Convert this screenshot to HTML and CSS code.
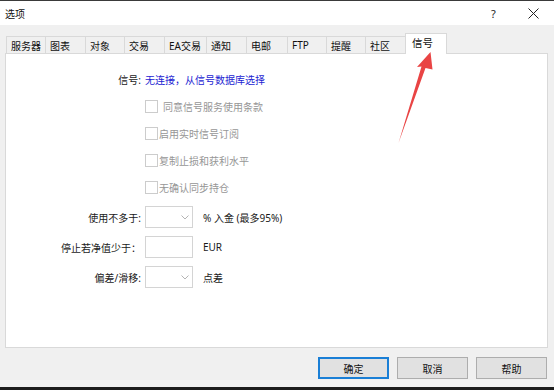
FILE: index.html
```html
<!DOCTYPE html>
<html lang="zh-CN">
<head>
<meta charset="utf-8">
<title>选项</title>
<link rel="stylesheet" href="styles.css">
</head>
<body>
<div class="window">
  <div class="titlebar">
    <span class="title">选项</span>
    <span class="help">?</span>
    <span class="close"><svg width="11" height="11" viewBox="0 0 11 11"><path d="M0.5 0.5 L10.5 10.5 M10.5 0.5 L0.5 10.5" stroke="#222" stroke-width="1" fill="none"/></svg></span>
  </div>
  <div class="tabs">
    <div class="tab w39">服务器</div>
    <div class="tab w40">图表</div>
    <div class="tab w39">对象</div>
    <div class="tab w40">交易</div>
    <div class="tab w42">EA交易</div>
    <div class="tab w40">通知</div>
    <div class="tab w41">电邮</div>
    <div class="tab w39">FTP</div>
    <div class="tab w39">提醒</div>
    <div class="tab w40">社区</div>
    <div class="tab active w41">信号</div>
  </div>
  <div class="panel">
    <div class="row row-signal">
      <span class="label">信号:</span>
      <span class="link">无连接，从信号数据库选择</span>
    </div>
    <div class="row row-check">
      <span></span>
      <span class="check"><span class="box"></span><span class="ctext first">同意信号服务使用条款</span></span>
    </div>
    <div class="row row-check">
      <span></span>
      <span class="check"><span class="box"></span><span class="ctext">启用实时信号订阅</span></span>
    </div>
    <div class="row row-check">
      <span></span>
      <span class="check"><span class="box"></span><span class="ctext">复制止损和获利水平</span></span>
    </div>
    <div class="row row-check">
      <span></span>
      <span class="check"><span class="box"></span><span class="ctext">无确认同步持仓</span></span>
    </div>
    <div class="row row-field first-field">
      <span class="label">使用不多于:</span>
      <span class="field"><span class="combo"><svg class="chev" width="8" height="5" viewBox="0 0 8 5"><path d="M0.5 0.5 L4 4 L7.5 0.5" stroke="#b4b4b4" stroke-width="1" fill="none"/></svg></span><span class="unit">% 入金 (最多95%)</span></span>
    </div>
    <div class="row row-field">
      <span class="label">停止若净值少于：</span>
      <span class="field"><span class="input"></span><span class="unit">EUR</span></span>
    </div>
    <div class="row row-field">
      <span class="label">偏差/滑移:</span>
      <span class="field"><span class="combo"><svg class="chev" width="8" height="5" viewBox="0 0 8 5"><path d="M0.5 0.5 L4 4 L7.5 0.5" stroke="#b4b4b4" stroke-width="1" fill="none"/></svg></span><span class="unit">点差</span></span>
    </div>
  </div>
  <div class="buttons">
    <button class="btn default">确定</button>
    <button class="btn">取消</button>
    <button class="btn">帮助</button>
  </div>
  <div class="taskbar"></div>
  <svg class="arrow" width="554" height="390" viewBox="0 0 554 390">
    <polygon points="430.5,52 417,67 421.5,66.5 398.5,143 425.5,68 432.5,69.5" fill="#e94444"/>
  </svg>
</div>
</body>
</html>
```
FILE: styles.css
```css
* { box-sizing: border-box; }
html, body { margin: 0; padding: 0; }
body {
  width: 554px;
  height: 390px;
  overflow: hidden;
  background: #f0f0f0;
  font-family: "Noto Sans", "Noto Sans CJK SC", sans-serif;
  font-size: 10px;
  color: #1a1a1a;
}
.window {
  position: relative;
  width: 554px;
  height: 390px;
  display: flex;
  flex-direction: column;
}
.titlebar {
  height: 25px;
  background: #ffffff;
  border-top: 1px solid #3a3a3a;
  display: flex;
  align-items: center;
  padding-left: 5px;
}
.title { flex: 1; font-size: 10px; color: #111; }
.help { width: 10px; margin-right: 27px; font-size: 11px; color: #222; }
.close { width: 11px; height: 11px; margin-right: 15px; display: flex; }
.tabs {
  margin-top: 8px;
  padding-left: 6px;
  height: 20px;
  display: flex;
  align-items: flex-end;
  position: relative;
  z-index: 1;
}
.tab {
  height: 17px;
  margin-right: -1px;
  border: 1px solid #d9d9d9;
  border-bottom: none;
  background: #f0f0f0;
  display: flex;
  align-items: center;
  padding-left: 4px;
  color: #111;
}
.tab.active {
  height: 21px;
  margin-bottom: -1px;
  background: #ffffff;
  padding-left: 6px;
  padding-bottom: 3px;
  font-size: 10.5px;
}
.w39 { width: 40px; }
.w40 { width: 41px; }
.w41 { width: 42px; }
.w42 { width: 43px; }
.panel {
  margin: 0 6px 0 5px;
  height: 295px;
  background: #ffffff;
  border: 1px solid #d9d9d9;
  padding-top: 12px;
}
.row {
  display: grid;
  grid-template-columns: 135px 1fr;
  column-gap: 4px;
  align-items: center;
}
.row-signal { height: 27px; }
.row-check { height: 27px; }
.row-field { height: 30px; }
.first-field { margin-top: 1px; }
.label { text-align: right; color: #1a1a1a; white-space: nowrap; }
.link { color: #2323d2; }
.check { display: flex; align-items: center; }
.box {
  width: 13px;
  height: 13px;
  border: 1px solid #cccccc;
  background: #fff;
}
.ctext { color: #969696; margin-left: 1px; }
.ctext.first { margin-left: 5px; }
.field { display: flex; align-items: center; }
.combo, .input {
  width: 48px;
  height: 22px;
  border: 1px solid #d4d4d4;
  background: #fff;
  display: flex;
  align-items: center;
  justify-content: flex-end;
  padding-right: 3px;
}
.chev { display: block; }
.unit { margin-left: 10px; color: #1a1a1a; }
.buttons {
  margin-top: 9px;
  display: flex;
  justify-content: flex-end;
  padding-right: 7px;
  gap: 8px;
}
.btn {
  width: 71px;
  height: 22px;
  background: #e1e1e1;
  border: 1px solid #adadad;
  font-family: "Noto Sans", "Noto Sans CJK SC", sans-serif;
  font-size: 10px;
  color: #111;
  padding: 0;
}
.btn.default { border: 2px solid #1a7fd6; }
.taskbar {
  margin-top: auto;
  height: 3px;
  background: #1c1c1c;
}
.arrow {
  position: absolute;
  left: 0;
  top: 0;
  pointer-events: none;
  z-index: 5;
}
```
